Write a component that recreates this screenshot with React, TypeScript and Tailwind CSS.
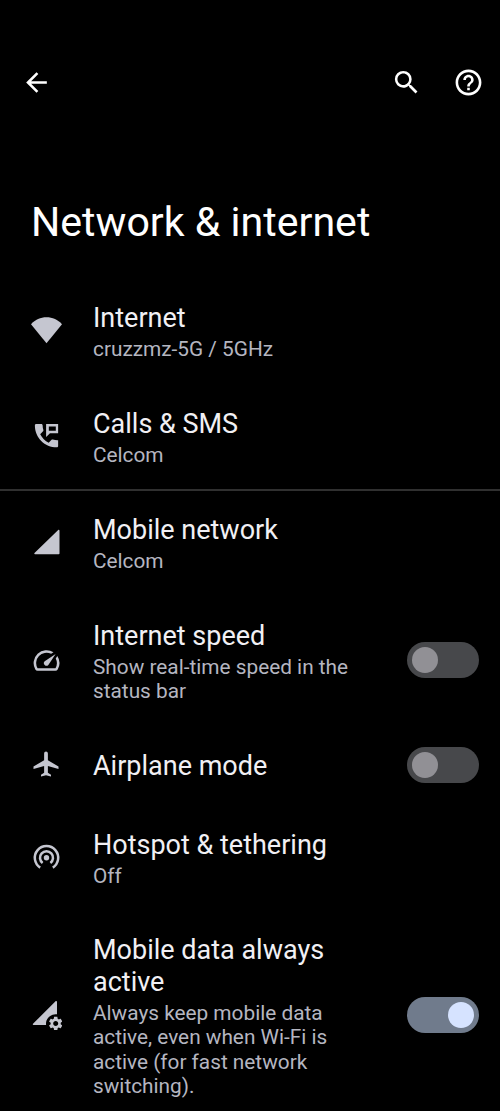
import { useState } from "react";
import type { ReactNode } from "react";
import { MdArrowBack, MdSearch, MdHelpOutline, MdAirplanemodeActive } from "react-icons/md";

const WifiIcon = () => (
  <svg width="31" height="31" viewBox="0 0 31 31" fill="currentColor">
    <path d="M0 9.200C4.200 4.600 9.500 2.300 15.500 2.300S26.800 4.600 31 9.200L15.500 28.200z" />
  </svg>
);

const CallsIcon = () => (
  <svg width="31" height="31" viewBox="0 0.600 24 24" fill="currentColor">
    <path d="M20.500 15.500c-1.250 0-2.450-.2-3.570-.57-.35-.11-.74-.03-1.020.24l-2.200 2.200c-2.830-1.440-5.150-3.750-6.590-6.580l2.200-2.210c.28-.27.36-.66.25-1.010C9.200 6.450 9 5.250 9 4c0-.55-.45-1-1-1H4c-.55 0-1 .45-1 1 0 9.390 7.610 17 17 17 .55 0 1-.45 1-1v-4.500z" />
    <path fillRule="evenodd" d="M11.700 3v10l3-3H21V3h-9.300zm7.500 5.200h-5.400V4.900h5.400v3.300z" />
  </svg>
);

const SignalIcon = () => (
  <svg width="31" height="31" viewBox="0 0 31 31" fill="currentColor">
    <path d="M4 27.200h23.700c.5 0 .8-.3.8-.8V3.700c0-.8-.8-1.100-1.300-.6L3.500 26.100c-.5.5-.2 1.100.5 1.100z" />
  </svg>
);

const SpeedIcon = () => (
  <svg width="31" height="31" viewBox="0 0 24 24" fill="currentColor">
    <path d="M20.380 8.570l-1.230 1.850a8 8 0 0 1-.22 7.580H5.070A8 8 0 0 1 15.580 6.850l1.850-1.230A10 10 0 0 0 3.350 19a2 2 0 0 0 1.720 1h13.850a2 2 0 0 0 1.740-1 10 10 0 0 0-.27-10.440zm-9.790 6.840a2 2 0 0 0 2.830 0l5.660-8.490-8.490 5.660a2 2 0 0 0 0 2.830z" />
  </svg>
);

const HotspotIcon = () => (
  <svg width="31" height="31" viewBox="0 0 31 31" fill="none" stroke="currentColor" strokeWidth="2.500">
    <circle cx="15.500" cy="15.800" r="2.700" fill="currentColor" stroke="none" />
    <path d="M11.600 21a6.500 6.500 0 1 1 7.800 0" />
    <path d="M9.200 25.600a11.700 11.700 0 1 1 12.600 0" />
  </svg>
);

const DataSettingsIcon = () => (
  <svg width="31" height="31" viewBox="0 0 31 31" fill="currentColor">
    <path d="M2.500 26h12.600a9.500 9.500 0 0 1 10.900-10.700V3.300c0-1.300-.9-1.600-1.700-.8L2 24.800c-.5.5-.2 1.200.5 1.200z" />
    <g transform="translate(16.300 16.100) scale(.7)">
      <path d="M19.140 12.940c.04-.3.06-.61.06-.94 0-.32-.02-.64-.07-.94l2.030-1.580c.18-.14.23-.41.12-.61l-1.920-3.320c-.12-.22-.37-.29-.59-.22l-2.390.96c-.5-.38-1.030-.7-1.620-.94l-.36-2.540c-.04-.24-.24-.41-.48-.41h-3.840c-.24 0-.43.17-.47.41l-.36 2.540c-.59.24-1.130.57-1.620.94l-2.390-.96c-.22-.08-.47 0-.59.22L2.740 8.870c-.12.21-.08.47.12.61l2.030 1.580c-.05.3-.09.63-.09.94s.02.64.07.94l-2.030 1.580c-.18.14-.23.41-.12.61l1.920 3.320c.12.22.37.29.59.22l2.390-.96c.5.38 1.030.7 1.620.94l.36 2.540c.05.24.24.41.48.41h3.840c.24 0 .44-.17.47-.41l.36-2.540c.59-.24 1.130-.56 1.620-.94l2.390.96c.22.08.47 0 .59-.22l1.920-3.320c.12-.22.07-.47-.12-.61l-2.010-1.580zM12 15.600c-1.980 0-3.600-1.620-3.600-3.600s1.620-3.600 3.600-3.600 3.600 1.620 3.600 3.600-1.620 3.600-3.600 3.600z" />
    </g>
  </svg>
);

const Toggle = ({ label, defaultOn = false }: { label: string; defaultOn?: boolean }) => {
  const [on, setOn] = useState(defaultOn);

  return (
    <button
      role="switch"
      aria-checked={on}
      aria-label={label}
      onClick={() => setOn(!on)}
      className={`flex h-9 w-18 items-center rounded-full px-[5px] ${
        on ? "justify-end bg-[#707b8c]" : "justify-start bg-[#47484b]"
      }`}
    >
      <span className={`size-[26px] rounded-full ${on ? "bg-[#d6e3ff]" : "bg-[#919095]"}`} />
    </button>
  );
};

type RowProps = {
  icon: ReactNode;
  title: string;
  summary?: string;
  className: string;
  children?: ReactNode;
};

const Row = ({ icon, title, summary, className, children }: RowProps) => (
  <div className={`flex items-center pl-[31px] pr-[21px] ${className}`}>
    <div className="w-[62px] shrink-0 text-[#c5c6d0]">{icon}</div>
    <div className="w-[270px] pt-[3px]">
      <h2 className="text-[27px] leading-8 text-[#f1f0f4]">{title}</h2>
      {summary && <p className="mt-[3px] text-[20.8px] leading-[24.5px] text-[#b5b6c0]">{summary}</p>}
    </div>
    <div className="ml-auto">{children}</div>
  </div>
);

const App = () => {
  return (
    <div className="h-[1111px] overflow-hidden bg-black font-[Roboto,sans-serif]">
      {/* Toolbar */}
      <header className="flex h-[165px] items-center pl-[21px] pr-4 text-white">
        <button aria-label="Back">
          <MdArrowBack size={31} />
        </button>
        <button aria-label="Search" className="ml-auto mr-[31px]">
          <MdSearch size={31} />
        </button>
        <button aria-label="Help">
          <MdHelpOutline size={31} />
        </button>
      </header>

      <h1 className="flex h-28 items-center pl-[31px] pt-[3px] text-[41.1px] text-white">Network & internet</h1>

      <main>
        <Row className="h-[106px]" icon={<WifiIcon />} title="Internet" summary="cruzzmz-5G / 5GHz" />
        <Row className="h-[106px]" icon={<CallsIcon />} title="Calls & SMS" summary="Celcom" />
        <Row
          className="h-[106px] border-t-2 border-[#303030] pb-px"
          icon={<SignalIcon />}
          title="Mobile network"
          summary="Celcom"
        />
        <Row
          className="h-[130px]"
          icon={<SpeedIcon />}
          title="Internet speed"
          summary="Show real-time speed in the status bar"
        >
          <Toggle label="Internet speed" />
        </Row>
        <Row
          className="h-[79px]"
          icon={<MdAirplanemodeActive size={30} className="mb-0.5" />}
          title="Airplane mode"
        >
          <Toggle label="Airplane mode" />
        </Row>
        <Row className="h-[106px]" icon={<HotspotIcon />} title="Hotspot & tethering" summary="Off" />
        <Row
          className="h-[209px]"
          icon={<DataSettingsIcon />}
          title="Mobile data always active"
          summary="Always keep mobile data active, even when Wi-Fi is active (for fast network switching)."
        >
          <Toggle label="Mobile data always active" defaultOn />
        </Row>
      </main>
    </div>
  );
};

export default App;
